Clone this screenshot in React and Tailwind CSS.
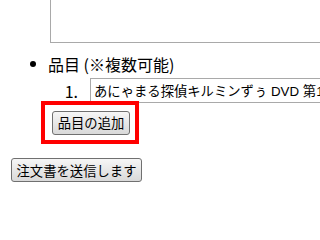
const font = '"Noto Sans CJK JP", "Liberation Sans", sans-serif';
const inputFont = '"Liberation Sans", "Noto Sans CJK JP", sans-serif';

const btn =
  "h-[24px] text-[13.33px] leading-none rounded-[3px] border border-[#707070] bg-gradient-to-b from-[#f6f6f6] to-[#d9d9d9] text-black";

export default function App() {
  return (
    <div
      className="w-[320px] h-[240px] overflow-hidden bg-white text-black text-[16px]"
      style={{ fontFamily: font }}
    >
      {/* tail of the textarea from the previous item */}
      <div className="w-[300px] h-[43px] border border-t-0 border-[#a9a9a9] ml-[50px]" />

      <div className="mt-[9px]">
        <div className="flex items-center h-[24px]">
          <span className="w-[30px] shrink-0" />
          <span className="w-[6px] h-[6px] shrink-0 rounded-full bg-black" />
          <span className="ml-[12px] leading-[24px] whitespace-nowrap">品目 (※複数可能)</span>
        </div>

        <div className="flex items-center h-[25px] mt-[2px]">
          <span className="w-[79px] shrink-0 text-right pr-px leading-[24px]">1.</span>
          <input
            readOnly
            value="あにゃまる探偵キルミンずぅ DVD 第1巻"
            className="ml-[11px] w-[260px] shrink-0 h-[25px] border border-[#a9a9a9] px-[3px] text-[13.33px] outline-none"
            style={{ fontFamily: inputFont }}
          />
        </div>

        <div className="mt-[6px] ml-[52px]">
          <span className="relative inline-block align-top">
            <button className={`${btn} w-[78px]`} style={{ fontFamily: font }}>
              品目の追加
            </button>
            <span className="absolute left-[-11px] top-[-8px] right-[-9px] bottom-[-9px] border-4 border-[#ff0000] pointer-events-none" />
          </span>
        </div>
      </div>

      <div className="mt-[22px] ml-[11px]">
        <button className={`${btn} w-[131px]`} style={{ fontFamily: font }}>
          注文書を送信します
        </button>
      </div>
    </div>
  );
}
